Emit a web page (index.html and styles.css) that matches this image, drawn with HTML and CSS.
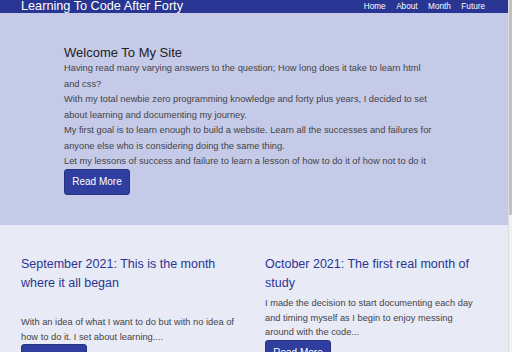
FILE: index.html
```html
<!DOCTYPE html>
<html lang="en">
<head>
  <meta charset="UTF-8" />
  <meta name="viewport" content="width=device-width, initial-scale=1.0">
  <title>Learning To Code After Forty</title>
  <link rel="stylesheet" href="styles.css">
</head>
<body>
  <div class="page">
    <header class="topbar">
      <h1 class="site-title">Learning To Code After Forty</h1>
      <nav class="nav">
        <a href="#">Home</a>
        <a href="#">About</a>
        <a href="#">Month</a>
        <a href="#">Future</a>
      </nav>
    </header>

    <section class="hero">
      <h2>Welcome To My Site</h2>
      <p>Having read many varying answers to the question; How long does it take to learn html<br>and css?</p>
      <p>With my total newbie zero programming knowledge and forty plus years, I decided to set about learning and documenting my journey.</p>
      <p>My first goal is to learn enough to build a website. Learn all the successes and failures for anyone else who is considering doing the same thing.</p>
      <p>Let my lessons of success and failure to learn a lesson of how to do it of how not to do it</p>
      <a class="btn" href="#">Read More</a>
    </section>

    <section class="months">
      <article class="card">
        <h3 class="card-title spaced">September 2021: This is the month where it all began</h3>
        <p>With an idea of what I want to do but with no idea of how to do it. I set about learning....</p>
        <a class="btn" href="#">Read More</a>
      </article>
      <article class="card">
        <h3 class="card-title">October 2021: The first real month of study</h3>
        <p>I made the decision to start documenting each day and timing myself as I begin to enjoy messing around with the code...</p>
        <a class="btn" href="#">Read More</a>
      </article>
    </section>
  </div>

  <div class="scrollbar"><div class="thumb"></div></div>
</body>
</html>
```

FILE: styles.css
```css
/* === Base === */
* { margin: 0; padding: 0; box-sizing: border-box; }
body {
  font-family: "Liberation Sans", Arial, sans-serif;
  height: 100vh;
  overflow: hidden;
  display: flex;
  background: #e8eaf6;
}

.page {
  flex: 1;
  min-width: 0;
}

.scrollbar {
  width: 4px;
  background: #f1f1f1;
  border-left: 1px solid #dcdcdc;
}

.thumb {
  height: 215px;
  background: #c1c1c1;
}

/* === Top bar === */
.topbar {
  background: #283593;
  height: 13px;
  padding: 0 23px 0 21px;
  display: flex;
  align-items: center;
  justify-content: space-between;
  color: white;
}

.site-title {
  font-size: 12.7px;
  font-weight: 400;
  line-height: 13px;
}

.nav {
  display: flex;
  gap: 10.5px;
}

.nav a {
  color: white;
  text-decoration: none;
  font-size: 8.2px;
  line-height: 13px;
}

/* === Hero === */
.hero {
  background: #c5cae9;
  height: 212px;
  padding: 32px 64px 0 64px;
  color: #444;
}

.hero h2 {
  color: #222;
  font-size: 13px;
  font-weight: 400;
  line-height: 16px;
}

.hero p {
  font-size: 9.3px;
  line-height: 15.5px;
  max-width: 382px;
}

.btn {
  display: block;
  background: #303f9f;
  color: white;
  text-decoration: none;
  font-size: 10px;
  height: 26px;
  width: 66px;
  text-align: center;
  border-radius: 3px;
  border: 1px solid #26337f;
  line-height: 24px;
}

.hero .btn {
  margin-top: -1px;
}

/* === Months === */
.months {
  display: grid;
  grid-template-columns: 218px 218px;
  column-gap: 26px;
  padding: 30px 21px 0 21px;
}

.card-title {
  color: #283593;
  font-size: 12.5px;
  font-weight: 400;
  line-height: 18.5px;
  margin-bottom: 4px;
}

.card-title.spaced {
  margin-bottom: 23px;
}

.card p {
  color: #444;
  font-size: 9.3px;
  line-height: 14.6px;
}
```
